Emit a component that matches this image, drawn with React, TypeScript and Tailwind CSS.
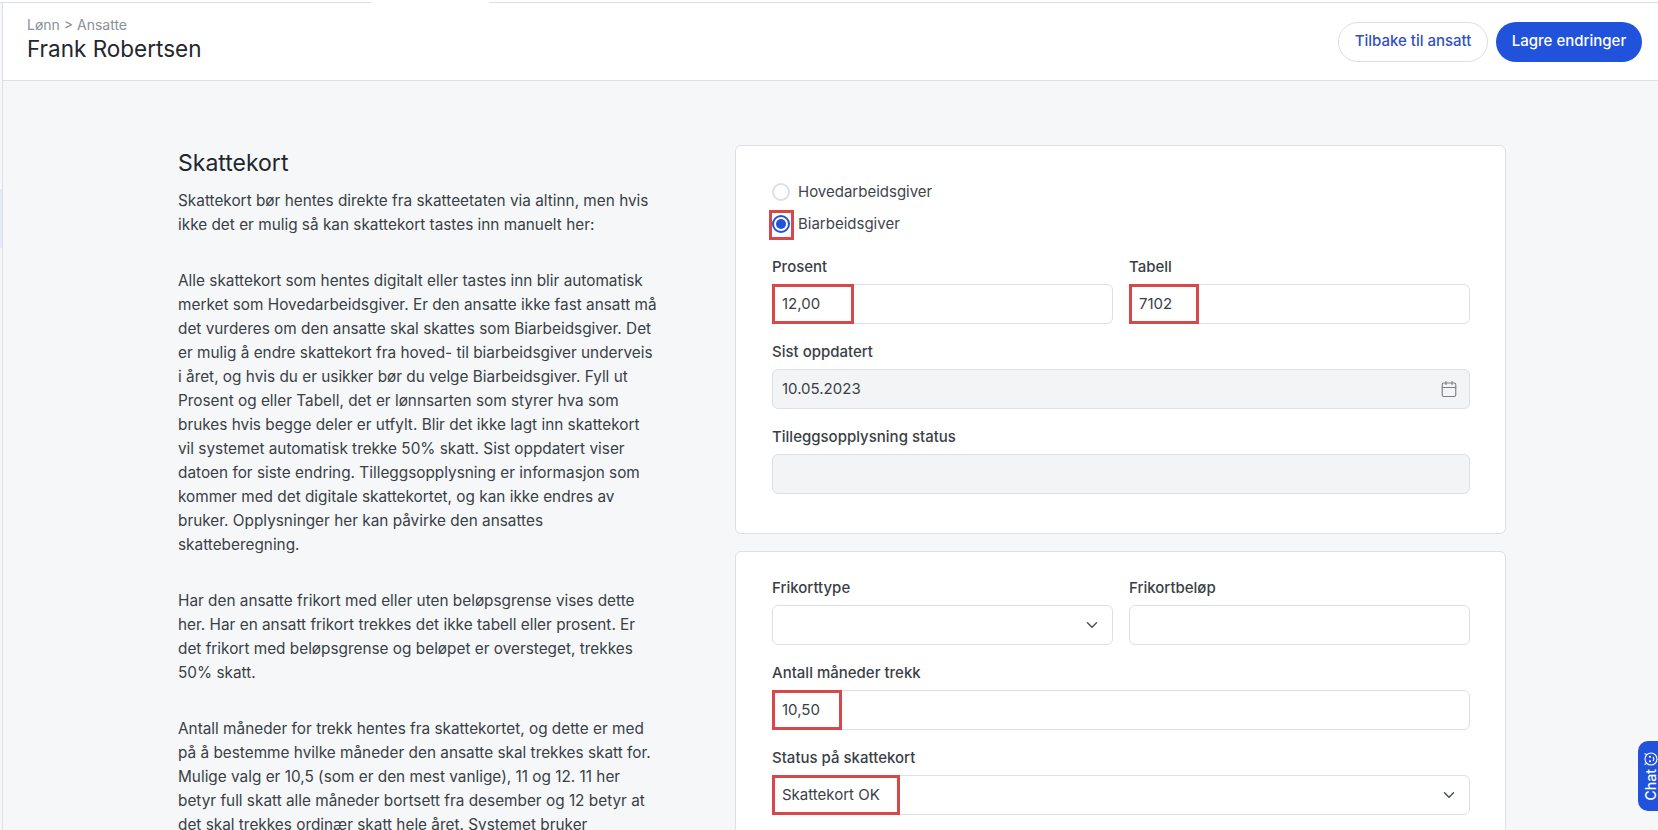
import { Calendar, ChevronDown } from "lucide-react";

function RedBox({ className }: { className: string }) {
  return <div className={`absolute border-[3px] border-[#d8484a] pointer-events-none ${className}`} />;
}

function Label({ children }: { children: string }) {
  return <div className="h-6 mb-1.5 text-[15px] leading-[25px] font-medium text-[#3a3f46]">{children}</div>;
}

function Field({ label, value, box, select, disabled, icon }: {
  label: string;
  value?: string;
  box?: string;
  select?: boolean;
  disabled?: boolean;
  icon?: boolean;
}) {
  return (
    <div className="mb-[15px]">
      <Label>{label}</Label>
      <div className={`relative h-10 flex items-center justify-between rounded-md border border-[#dcdfe3] pl-[9px] pr-[11px] text-[15px] text-[#3a3f46] ${disabled ? "bg-[#f3f4f6]" : "bg-white"}`}>
        <span className="pt-px">{value}</span>
        {select && <ChevronDown size={18} strokeWidth={2} className="text-[#4b5159]" />}
        {icon && <Calendar size={18} strokeWidth={1.5} className="text-[#7b8088]" />}
        {box && <RedBox className={box} />}
      </div>
    </div>
  );
}

function Radio({ label, checked }: { label: string; checked?: boolean }) {
  return (
    <div className="relative h-8 flex items-center gap-2 text-[15px] text-[#3f454c]">
      {checked ? (
        <div className="w-[18px] h-[18px] rounded-full border-2 border-[#2152dc] flex items-center justify-center">
          <div className="w-[10px] h-[10px] rounded-full bg-[#2152dc]" />
        </div>
      ) : (
        <div className="w-[18px] h-[18px] rounded-full border-2 border-[#dcdfe3] bg-white" />
      )}
      <span>{label}</span>
      {checked && <RedBox className="left-[-3px] top-[2px] w-[25px] h-[30px]" />}
    </div>
  );
}

export default function App() {
  return (
    <div className="h-[830px] overflow-hidden relative flex flex-col bg-[#f5f7f9] font-['Inter',sans-serif]">
      <div className="flex h-[3px] shrink-0 bg-white">
        <div className="w-[371px] border-b border-[#dcdfe3]" />
        <div className="w-[118px]" />
        <div className="flex-1 border-b border-[#dcdfe3]" />
      </div>

      <div className="flex-1 ml-[2px] border-l border-[#dcdfe3] relative">
        <div className="absolute left-[-3px] top-[186px] w-[2px] h-[59px] bg-[#e4ebf8]" />
        <header className="h-[78px] bg-white border-b border-[#dcdfe3] pl-[24px] pr-[16px] flex items-center justify-between">
          <div className="pb-[3px]">
            <div className="text-[14px] leading-[18px] text-[#8b9097]">Lønn &gt; Ansatte</div>
            <h1 className="text-[22.5px] leading-[30px] text-[#23272d]">Frank Robertsen</h1>
          </div>
          <div className="flex gap-2">
            <button className="h-10 w-[150px] rounded-full border border-[#dcdfe3] bg-white text-[15px] font-medium text-[#2f50c4]">
              Tilbake til ansatt
            </button>
            <button className="h-10 w-[146px] rounded-full bg-[#2152dc] text-[15px] font-medium text-white">
              Lagre endringer
            </button>
          </div>
        </header>

        <div className="flex pl-[175px] pt-[64px]">
          <div className="w-[479px] mr-[78px] pt-[4px] text-[15.35px] leading-6 text-[#3a3f46]">
            <h2 className="text-[23px] leading-7 mb-[12px] text-[#23272d]">Skattekort</h2>
            <p className="mb-8">
              Skattekort bør hentes direkte fra skatteetaten via altinn, men hvis ikke det er mulig så kan skattekort tastes inn manuelt her:
            </p>
            <p className="mb-8">
              Alle skattekort som hentes digitalt eller tastes inn blir automatisk merket som Hovedarbeidsgiver. Er den ansatte ikke fast ansatt må det vurderes om den ansatte skal skattes som Biarbeidsgiver. Det er mulig å endre skattekort fra hoved- til biarbeidsgiver underveis i året, og hvis du er usikker bør du velge Biarbeidsgiver. Fyll ut Prosent og eller Tabell, det er lønnsarten som styrer hva som brukes hvis begge deler er utfylt. Blir det ikke lagt inn skattekort vil systemet automatisk trekke 50% skatt. Sist oppdatert viser datoen for siste endring. Tilleggsopplysning er informasjon som kommer med det digitale skattekortet, og kan ikke endres av bruker. Opplysninger her kan påvirke den ansattes skatteberegning.
            </p>
            <p className="mb-8">
              Har den ansatte frikort med eller uten beløpsgrense vises dette her. Har en ansatt frikort trekkes det ikke tabell eller prosent. Er det frikort med beløpsgrense og beløpet er oversteget, trekkes 50% skatt.
            </p>
            <p>
              Antall måneder for trekk hentes fra skattekortet, og dette er med på å bestemme hvilke måneder den ansatte skal trekkes skatt for. Mulige valg er 10,5 (som er den mest vanlige), 11 og 12. 11 her betyr full skatt alle måneder bortsett fra desember og 12 betyr at det skal trekkes ordinær skatt hele året. Systemet bruker
            </p>
          </div>

          <div className="w-[771px] shrink-0">
            <div className="h-[389px] rounded-md border border-[#dcdfe3] bg-white pl-[36px] pr-[35px] pt-[30px]">
              <Radio label="Hovedarbeidsgiver" />
              <Radio label="Biarbeidsgiver" checked />
              <div className="grid grid-cols-[341px_341px] gap-x-[16px] mt-[14px]">
                <Field label="Prosent" value="12,00" box="left-[-1px] top-[-1px] w-[82px] h-10" />
                <Field label="Tabell" value="7102" box="left-[-1px] top-[-1px] w-[70px] h-10" />
              </div>
              <Field label="Sist oppdatert" value="10.05.2023" disabled icon />
              <Field label="Tilleggsopplysning status" disabled />
            </div>

            <div className="mt-[17px] rounded-md border border-[#dcdfe3] bg-white pl-[36px] pr-[35px] pt-[23px] pb-[40px]">
              <div className="grid grid-cols-[341px_341px] gap-x-[16px]">
                <Field label="Frikorttype" select />
                <Field label="Frikortbeløp" />
              </div>
              <Field label="Antall måneder trekk" value="10,50" box="left-[-1px] top-[-1px] w-[70px] h-10" />
              <Field label="Status på skattekort" value="Skattekort OK" select box="left-[-1px] top-[-1px] w-[128px] h-10" />
            </div>
          </div>
        </div>
      </div>

      <div className="absolute right-0 top-[741px] w-5 h-[70px] rounded-l-[10px] bg-[#2152dc] text-white flex flex-col items-end justify-center gap-0.5">
        <svg width="16" height="16" viewBox="0 0 16 16" fill="none" stroke="currentColor" strokeWidth="1.1" className="-rotate-90">
          <circle cx="8" cy="9" r="6" />
          <path d="M3.5 4.5 2.5 2.5M12.5 4.5l1-2" />
          <circle cx="5.8" cy="8" r="0.5" fill="currentColor" />
          <circle cx="10.2" cy="8" r="0.5" fill="currentColor" />
          <path d="M6 11c1.2 1 2.8 1 4 0" />
        </svg>
        <span className="[writing-mode:vertical-rl] rotate-180 text-[14px] font-medium leading-none">Chat</span>
      </div>
    </div>
  );
}
